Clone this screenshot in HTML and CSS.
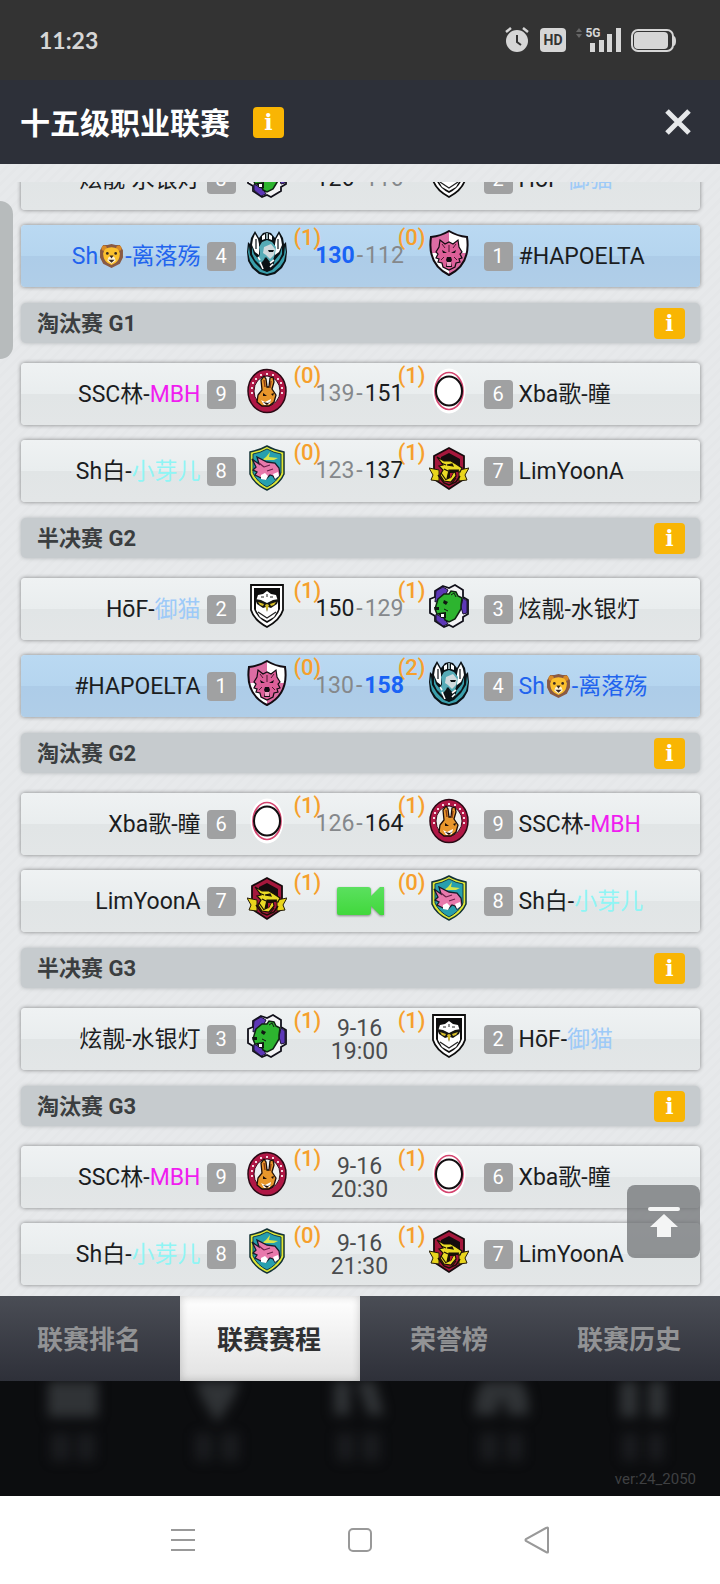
FILE: index.html
```html
<!DOCTYPE html>
<html lang="zh-CN">
<head>
  <meta charset="UTF-8">
  <meta name="viewport" content="width=device-width, initial-scale=1">
  <title>十五级职业联赛</title>
  <link rel="stylesheet" href="styles.css">
</head>
<body>

  <!-- shared drawings: team crests and the lion -->
  <svg class="sprites" aria-hidden="true">
    <symbol id="knight" viewBox="0 0 40 46">
      <path d="M8 1 4 8 3 14 1 12 0 22 1 31 5 38 12 44 20 46 28 44 35 38 39 31 40 22 39 12 37 14 36 8 32 1 28 8 24 3 20 2 16 3 12 8Z" fill="#0b1216"/>
      <path d="M2 16 3 25 8 33 15 40 20 42 25 40 32 33 37 25 38 16 39 22 37 31 33 37 27 42 20 44 13 42 7 37 3 31 1 22ZM5 17 7 24 12 30 14 36 8 30 5 24ZM35 17 33 24 28 30 26 36 32 30 35 24Z" fill="#3a9fac"/>
      <path d="M8 4 6 9 5 15 8 22 12 25 12 14 11 9ZM32 4 34 9 35 15 32 22 28 25 28 14 29 9Z" fill="#fff"/>
      <path d="M15 6 18 4V9L15 10ZM22 4 25 6V10L22 9Z" fill="#fff"/>
      <path d="M19 3h2v6h-2Z" fill="#8fa6aa"/>
      <path d="M12 17 15 12 20 10 25 12 29 17 28 24 26 30 23 32 19 27 16 31 13 34 11 29 13 24Z" fill="#56abb6"/>
      <path d="M17 17 24 14 28 19 27 25 23 29 19 25 16 23Z" fill="#d0dadd"/>
      <path d="M21 20 27 20 26 22 22 22ZM18 27 20 33 22 38 20 42 17 38 17 32Z" fill="#0b1216"/>
      <path d="M9 9v10M31 9v10" stroke="#0b1216" stroke-width="1.2"/>
      <path d="M13 32 16 39M23 33 27 30M23 37 26 34M11 27 13 30" stroke="#fff" stroke-width="1.6"/>
    </symbol>

    <symbol id="wolf" viewBox="0 0 40 46">
      <path d="M20 1Q28 6 38 7 42 34 20 45-2 34 2 7 12 6 20 1Z" fill="#fff"/>
      <path d="M20 1V23H2Q0 14 2 7 12 6 20 1ZM20 23H38Q35 38 20 45Z" fill="#dc6da3"/>
      <path d="M20 1Q28 6 38 7 42 34 20 45-2 34 2 7 12 6 20 1Z" fill="none" stroke="#120c12" stroke-width="2"/>
      <path d="M11 10 16 14 20 12 24 14 29 10 30 17 33 22 31 24 33 28 30 29 31 32 27 33 26 37 20 40 14 37 13 33 9 32 10 29 7 28 9 24 7 22 10 17Z" fill="#dc5f98" stroke="#120c12" stroke-width="1.2"/>
      <path d="M13 20 18 23 14 23ZM27 20 22 23 26 23ZM18 27h4l1 3-1 2 1 5h-6l1-5-1-2Z" fill="#120c12"/>
      <path d="M13 14 16 18M27 14 24 18M20 15v7M15 27l-3 3M25 27l3 3" stroke="#4c1a32"/>
      <path d="M18 32h4v4h-4Z" fill="#eda0c3"/>
    </symbol>

    <symbol id="rabbit" viewBox="0 0 40 46">
      <ellipse cx="20" cy="23" rx="19" ry="21.5" fill="#b01745" stroke="#2b0915" stroke-width="1.5"/>
      <path d="M5 15h2M8 11h2M13 7h2M19 6h2M25 7h2M30 11h2M33 15h2M4 20h2M34 20h2M4 25h2M34 25h2" stroke="#f6d5df" stroke-width="2"/>
      <ellipse cx="20" cy="23" rx="13" ry="15" fill="#eef0ee" stroke="#3b0c1b"/>
      <path d="M15 22 14 12 17 8 19 11 20 19 22 19 23 10 26 9 27 14 25 21 29 27 27 34 22 38 15 38 10 34 11 27Z" fill="#e8962b" stroke="#1b0d08" stroke-width="1.3"/>
      <path d="M17 12 18 19M24 13 23 20" stroke="#8c3c12" stroke-width="1.4"/>
      <path d="M14 32 18 34 24 31 23 36 17 37Z" fill="#fff"/>
      <path d="M16 25 20 28 16 28ZM24 26 27 25 26 28ZM16 34 21 35 24 33 20 37Z" fill="#1b0d08"/>
    </symbol>

    <symbol id="pig" viewBox="0 0 40 46">
      <path d="M20 1Q27 5 37 7V29Q33 39 20 45 7 39 3 29V7Q13 5 20 1Z" fill="#dfe735" stroke="#123236" stroke-width="1.5"/>
      <path d="M20 4Q27 8 34 9V28Q30 37 20 42 10 37 6 28V9Q13 8 20 4Z" fill="#279fae" stroke="#163e48"/>
      <path d="M19 12 23 7 22 12 31 13 27 15 15 15Z" fill="#d6e54b"/>
      <path d="M5 14 12 19 10 12 20 17 28 18 32 23 33 30 28 34 26 31 23 30 19 34 14 33 8 30 10 27 6 25 9 22Z" fill="#e879ac" stroke="#151c28" stroke-width="1.3"/>
      <path d="M14 30 18 28 21 31 19 35 14 34ZM26 29 31 27 32 31 28 34Z" fill="#fff"/>
      <path d="M17 22 23 20M20 26 26 24M12 18 17 22" stroke="#6d2049" stroke-width="1.3"/>
    </symbol>

    <symbol id="oval" viewBox="0 0 40 46">
      <ellipse cx="20" cy="23" rx="16.5" ry="22.5" fill="#fff"/>
      <ellipse cx="20" cy="23" rx="14" ry="18.5" fill="#fff" stroke="#d4446f" stroke-width="1.7"/>
      <ellipse cx="20" cy="23" rx="13" ry="14.5" fill="#fff" stroke="#120d10" stroke-width="2"/>
    </symbol>

    <symbol id="dragon" viewBox="0 0 40 46">
      <path d="M20 3 35 11V34L20 44 5 34V11Z" fill="#a5173c" stroke="#160a0d" stroke-width="1.8"/>
      <path d="M20 8 31 14V22L24 18 12 18 12 12Z" fill="#150c0e"/>
      <path d="M0 23 10 25V36L2 35 4 30ZM40 23 30 25V36L38 35 36 30Z" fill="#e9d51c" stroke="#241b09"/>
      <path d="M8 12 15 16 22 16 27 19 33 23 31 27 26 26 27 31 22 37 15 36 11 30 14 25 10 21 14 20Z" fill="#eadb25" stroke="#181106" stroke-width="1.2"/>
      <path d="M18 20 23 19 24 21ZM20 25 30 25 24 28 22 32 18 34ZM12 18 17 20M12 28 17 35M15 24 19 26M27 33 23 38" fill="#181106" stroke="#181106" stroke-width="1.2"/>
      <path d="M21 28 24 28 21 34Z" fill="#b11a33"/>
      <path d="M9 30 15 38 20 40 27 37 31 31" fill="none" stroke="#181106" stroke-width="1.5"/>
    </symbol>

    <symbol id="owl" viewBox="0 0 40 46">
      <path d="M4 2H36V27Q33 37 20 44 7 37 4 27Z" fill="#fff" stroke="#0d0d0d" stroke-width="1.8"/>
      <path d="M7 5H33V26Q30 35 20 40 10 35 7 26Z" fill="#0d0d0d"/>
      <path d="M11 12 16 11 20 8 24 11 29 12 31 18 31 27 27 34 20 38 13 34 9 27 9 18Z" fill="#fff"/>
      <path d="M8 16 14 17 20 20 26 17 32 16 30 21 24 25 21 24 20 29 19 24 16 25 10 21Z" fill="#151512"/>
      <path d="M11 19 17 21 16 23 13 22ZM29 19 23 21 24 23 27 22ZM18 22 20 21 22 22 20 28Z" fill="#d6bd27"/>
      <path d="M11 29 20 35 29 29" fill="none" stroke="#222" stroke-width="1.2"/>
      <path d="M14 14h3M23 14h3M20 11v3" stroke="#222"/>
    </symbol>

    <symbol id="bear" viewBox="0 0 40 46">
      <path d="M14 3 20 5 26 2 34 7V14L39 17V31L34 34V38L24 44 20 42 15 44 6 38V33L1 30V16L6 14V8Z" fill="#f4f4f6" stroke="#11101a" stroke-width="1.8"/>
      <path d="M14 4 19 7 16 13 10 17 6 19 7 8ZM34 15 38 18V30L34 31 32 24ZM7 31 16 36 19 41 14 43 7 37Z" fill="#5d38b6" stroke="#1a1232"/>
      <path d="M9 16 15 11 20 11 22 8 27 9 29 13 33 15 32 22 32 26 29 31 26 36 20 39 16 37 15 31 8 31 6 26Z" fill="#2db42f" stroke="#102413" stroke-width="1.5"/>
      <path d="M15 17 19 19 17 22 14 20ZM5 24 10 24 10 27 6 27ZM9 30 17 29 17 35 12 35Z" fill="#101712"/>
      <path d="M12 31h3v3h-3Z" fill="#fff"/>
      <path d="M22 12 25 10 27 14M15 26 19 28" fill="none" stroke="#101712"/>
    </symbol>

    <symbol id="lion" viewBox="0 0 24 24">
      <path d="M4 2 8 2 12 1 16 2 20 2 23 7 23 14 20 20 12 24 4 20 1 14 1 7Z" fill="#8a5a43"/>
      <circle cx="5" cy="5" r="2.5" fill="#d98b27"/>
      <circle cx="19" cy="5" r="2.5" fill="#d98b27"/>
      <path d="M12 4Q19 4 20 10 20 16 16 19L12 21 8 19Q4 16 4 10 5 4 12 4Z" fill="#fbc02d"/>
      <path d="M9 14Q12 11 15 14L16 17 12 20 8 17Z" fill="#fff3d6"/>
      <path d="M10 12h4l-2 3ZM9 16h6l-3 3Z" fill="#3a2a24"/>
      <circle cx="8" cy="10" r="1.3" fill="#3a2a24"/>
      <circle cx="16" cy="10" r="1.3" fill="#3a2a24"/>
    </symbol>
  </svg>

  <div class="app">

    <div class="status-bar">
      <span class="clock">11:23</span>
      <svg class="status-icons" viewBox="0 0 172 28" aria-hidden="true">
        <g fill="#d6d6d6">
          <circle cx="13" cy="15" r="11"/>
          <path d="M2 6 7 2M24 6 19 2" stroke="#d6d6d6" stroke-width="2.5"/>
          <path d="M13 9v7l4 3" fill="none" stroke="#333" stroke-width="2"/>
          <rect x="36" y="2" width="26" height="24" rx="4"/>
          <path d="M72 6l3-4 3 4ZM72 8l3 4 3-4Z" fill="#666"/>
          <rect x="86" y="17" width="5" height="9"/>
          <rect x="95" y="14" width="5" height="12"/>
          <rect x="103" y="8" width="5" height="18"/>
          <rect x="112" y="2" width="5" height="24"/>
          <rect x="128" y="4" width="41" height="21" rx="6" fill="none" stroke="#d6d6d6" stroke-width="2"/>
          <rect x="130" y="6" width="34" height="17" rx="4"/>
          <path d="M169 10h1q2 1 2 5t-2 5h-1Z"/>
        </g>
        <text x="49" y="19" class="hd">HD</text>
        <text x="89" y="11" class="net">5G</text>
      </svg>
    </div>

    <header class="title-bar">
      <h1>十五级职业联赛</h1>
      <button class="info" aria-label="联赛说明">i</button>
      <button class="close" aria-label="关闭">
        <svg viewBox="0 0 28 28"><path d="M3 3 25 25M25 3 3 25" stroke="#e6e8ea" stroke-width="5"/></svg>
      </button>
    </header>

    <main class="content">
      <div class="drawer-handle"></div>
      <div class="schedule">

        <div class="match">
          <span class="name home">炫靓-水银灯</span><span class="seed">3</span>
          <svg class="crest"><use href="#bear"/></svg>
          <div class="result"><b class="wins">(1)</b><span class="score"><span class="won">126</span>-<span>116</span></span><b class="wins away">(0)</b></div>
          <svg class="crest away"><use href="#owl"/></svg>
          <span class="seed">2</span><span class="name">HōF-<span class="sky">御猫</span></span>
        </div>
        <div class="match mine">
          <span class="name home me">Sh<svg class="lion"><use href="#lion"/></svg>-离落殇</span><span class="seed">4</span>
          <svg class="crest"><use href="#knight"/></svg>
          <div class="result"><b class="wins">(1)</b><span class="score"><span class="my-win">130</span>-<span>112</span></span><b class="wins away">(0)</b></div>
          <svg class="crest away"><use href="#wolf"/></svg>
          <span class="seed">1</span><span class="name">#HAPOELTA</span>
        </div>

        <div class="round"><h2>淘汰赛 G1</h2><button class="info" aria-label="淘汰赛 G1 说明">i</button></div>
        <div class="match">
          <span class="name home">SSC林-<span class="pink">MBH</span></span><span class="seed">9</span>
          <svg class="crest"><use href="#rabbit"/></svg>
          <div class="result"><b class="wins">(0)</b><span class="score"><span>139</span>-<span class="won">151</span></span><b class="wins away">(1)</b></div>
          <svg class="crest away"><use href="#oval"/></svg>
          <span class="seed">6</span><span class="name">Xba歌-瞳</span>
        </div>
        <div class="match">
          <span class="name home">Sh白-<span class="cyan">小芽儿</span></span><span class="seed">8</span>
          <svg class="crest"><use href="#pig"/></svg>
          <div class="result"><b class="wins">(0)</b><span class="score"><span>123</span>-<span class="won">137</span></span><b class="wins away">(1)</b></div>
          <svg class="crest away"><use href="#dragon"/></svg>
          <span class="seed">7</span><span class="name">LimYoonA</span>
        </div>

        <div class="round"><h2>半决赛 G2</h2><button class="info" aria-label="半决赛 G2 说明">i</button></div>
        <div class="match">
          <span class="name home">HōF-<span class="sky">御猫</span></span><span class="seed">2</span>
          <svg class="crest"><use href="#owl"/></svg>
          <div class="result"><b class="wins">(1)</b><span class="score"><span class="won">150</span>-<span>129</span></span><b class="wins away">(1)</b></div>
          <svg class="crest away"><use href="#bear"/></svg>
          <span class="seed">3</span><span class="name">炫靓-水银灯</span>
        </div>
        <div class="match mine">
          <span class="name home">#HAPOELTA</span><span class="seed">1</span>
          <svg class="crest"><use href="#wolf"/></svg>
          <div class="result"><b class="wins">(0)</b><span class="score"><span>130</span>-<span class="my-win">158</span></span><b class="wins away">(2)</b></div>
          <svg class="crest away"><use href="#knight"/></svg>
          <span class="seed">4</span><span class="name me">Sh<svg class="lion"><use href="#lion"/></svg>-离落殇</span>
        </div>

        <div class="round"><h2>淘汰赛 G2</h2><button class="info" aria-label="淘汰赛 G2 说明">i</button></div>
        <div class="match">
          <span class="name home">Xba歌-瞳</span><span class="seed">6</span>
          <svg class="crest"><use href="#oval"/></svg>
          <div class="result"><b class="wins">(1)</b><span class="score"><span>126</span>-<span class="won">164</span></span><b class="wins away">(1)</b></div>
          <svg class="crest away"><use href="#rabbit"/></svg>
          <span class="seed">9</span><span class="name">SSC林-<span class="pink">MBH</span></span>
        </div>
        <div class="match">
          <span class="name home">LimYoonA</span><span class="seed">7</span>
          <svg class="crest"><use href="#dragon"/></svg>
          <div class="result"><b class="wins">(1)</b>
            <button class="live" aria-label="观看直播">
              <svg viewBox="0 0 48 30">
                <defs><linearGradient id="cam" x2="0" y2="1"><stop stop-color="#5be05f"/><stop offset="1" stop-color="#41d83c"/></linearGradient></defs>
                <path d="M3 1H32Q35 1 35 4V10L44 1H48V29H44L35 20V26Q35 29 32 29H3Q1 29 1 27V3Q1 1 3 1Z" fill="url(#cam)"/>
              </svg>
            </button>
            <b class="wins away">(0)</b></div>
          <svg class="crest away"><use href="#pig"/></svg>
          <span class="seed">8</span><span class="name">Sh白-<span class="cyan">小芽儿</span></span>
        </div>

        <div class="round"><h2>半决赛 G3</h2><button class="info" aria-label="半决赛 G3 说明">i</button></div>
        <div class="match">
          <span class="name home">炫靓-水银灯</span><span class="seed">3</span>
          <svg class="crest"><use href="#bear"/></svg>
          <div class="result"><b class="wins">(1)</b><time class="date">9-16<br>19:00</time><b class="wins away">(1)</b></div>
          <svg class="crest away"><use href="#owl"/></svg>
          <span class="seed">2</span><span class="name">HōF-<span class="sky">御猫</span></span>
        </div>

        <div class="round"><h2>淘汰赛 G3</h2><button class="info" aria-label="淘汰赛 G3 说明">i</button></div>
        <div class="match">
          <span class="name home">SSC林-<span class="pink">MBH</span></span><span class="seed">9</span>
          <svg class="crest"><use href="#rabbit"/></svg>
          <div class="result"><b class="wins">(1)</b><time class="date">9-16<br>20:30</time><b class="wins away">(1)</b></div>
          <svg class="crest away"><use href="#oval"/></svg>
          <span class="seed">6</span><span class="name">Xba歌-瞳</span>
        </div>
        <div class="match">
          <span class="name home">Sh白-<span class="cyan">小芽儿</span></span><span class="seed">8</span>
          <svg class="crest"><use href="#pig"/></svg>
          <div class="result"><b class="wins">(0)</b><time class="date">9-16<br>21:30</time><b class="wins away">(1)</b></div>
          <svg class="crest away"><use href="#dragon"/></svg>
          <span class="seed">7</span><span class="name">LimYoonA</span>
        </div>

      </div>
      <button class="to-top" aria-label="回到顶部">
        <svg viewBox="0 0 32 32"><path d="M2 1H30Q32 1 32 3T30 5H2Q0 5 0 3T2 1ZM16 8 30 21H23V31H9V21H2Z" fill="#f4f5f5"/></svg>
      </button>
    </main>

    <nav class="tabs">
      <button>联赛排名</button>
      <button class="active">联赛赛程</button>
      <button>荣誉榜</button>
      <button>联赛历史</button>
    </nav>

    <footer class="backdrop">
      <svg viewBox="0 0 720 115" preserveAspectRatio="none" aria-hidden="true">
        <g fill="#303336">
          <path d="M48-12H98V36H48ZM190-12H245L232 20 217 42 203 20ZM334-10H350V34H334ZM352-12H372L384 34H368ZM476 14Q486-12 502-12T528 14L529 34H508L502 14 496 34H474ZM620-12H638V36H620ZM648-12H666V36H648Z"/>
          <g opacity=".4">
            <path d="M51 52H70V80H51ZM77 52H95V80H77ZM195 52H212V80H195ZM221 52H239V80H221ZM337 52H354V80H337ZM362 52H380V80H362ZM480 52H498V80H480ZM506 52H523V80H506ZM622 52H638V80H622ZM648 52H664V80H648Z"/>
          </g>
        </g>
      </svg>
      <span class="version">ver:24_2050</span>
    </footer>

    <div class="system-nav">
      <button aria-label="菜单"><svg viewBox="0 0 28 28"><path d="M2 4H26M2 14H26M2 24H26"/></svg></button>
      <button aria-label="主页"><svg viewBox="0 0 28 28"><rect x="3" y="3" width="22" height="22" rx="4"/></svg></button>
      <button aria-label="返回"><svg viewBox="0 0 28 28"><path d="M25 2V26Q25 27 23 26L3 15Q2 14 3 13L23 2Q25 1 25 2Z"/></svg></button>
    </div>

  </div>

</body>
</html>
```

FILE: styles.css
```css
* {
  box-sizing: border-box;
}
body {
  margin: 0;
  font-family: Roboto, "Noto Sans CJK SC", sans-serif;
  color: #1b1d1f;
}
button {
  padding: 0;
  border: none;
  background: none;
  font-family: inherit;
  cursor: pointer;
}
svg {
  display: block;
}
.sprites {
  position: absolute;
  width: 0;
  height: 0;
}
.app {
  display: flex;
  flex-direction: column;
  height: 100vh;
}

/* phone status bar */
.status-bar {
  display: flex;
  align-items: center;
  justify-content: space-between;
  height: 80px;
  padding: 0 44px 0 39px;
  background: #333;
  color: #d6d6d6;
}
.clock {
  font-family: Lato, Roboto, sans-serif;
  font-size: 23px;
  font-weight: bold;
}
.status-icons {
  width: 172px;
  height: 28px;
}
.hd {
  font-size: 14px;
  font-weight: bold;
  fill: #333;
  text-anchor: middle;
}
.net {
  font-size: 12px;
  font-weight: bold;
  fill: #d6d6d6;
  text-anchor: middle;
}

.title-bar {
  display: flex;
  align-items: center;
  height: 84px;
  padding: 0 28px 0 20px;
  background: #2d3039;
}
.title-bar h1 {
  margin: 0 23px 0 0;
  padding-top: 3px;
  font-size: 30px;
  font-weight: bold;
  line-height: 40px;
  color: #fff;
}
.close {
  margin-left: auto;
}
.close svg {
  width: 28px;
  height: 28px;
}
.info {
  width: 31px;
  height: 31px;
  border-radius: 4px;
  background: #f9b503;
  color: #fff;
  font-family: "DejaVu Serif", serif;
  font-size: 22px;
  font-weight: bold;
  line-height: 31px;
}

/* schedule list, scrolled to its end */
.content {
  position: relative;
  flex: 1;
  min-height: 0;
  padding-top: 18px;
  background: repeating-linear-gradient(135deg, #e7e9eb 0 5px, #e5e7e9 5px 8px);
}
.schedule {
  display: flex;
  flex-direction: column;
  justify-content: flex-end;
  gap: 15px;
  height: 100%;
  padding: 0 20px 11px 21px;
  overflow: hidden;
}
.drawer-handle {
  position: absolute;
  left: 0;
  top: 37px;
  width: 13px;
  height: 158px;
  border-radius: 0 13px 13px 0;
  background: #b7bbbc;
}
.round {
  display: flex;
  flex: none;
  align-items: center;
  justify-content: space-between;
  height: 40px;
  margin: 1px 0 5px;
  padding: 0 15px 0 16px;
  border-radius: 5px;
  background: #c6cbce;
  box-shadow: 0 0 4px #b0b4b6;
}
.round h2 {
  margin: 0;
  padding-top: 2px;
  font-size: 22px;
  font-weight: bold;
  line-height: 30px;
  color: #3b3e40;
}
.match {
  display: grid;
  flex: none;
  grid-template-columns: minmax(0, 1fr) 29px 62px 124px 62px 29px minmax(0, 1fr);
  align-items: center;
  height: 62px;
  padding-right: 2px;
  border-radius: 4px;
  background: linear-gradient(#eff2f3, #e9edee 50%, #e1e5e6 50%, #e3e6e7);
  box-shadow: 0 0 4px rgba(0, 0, 0, .45);
}
.match.mine {
  background: linear-gradient(#bad9f2, #b5d5ef 50%, #adcce8 50%, #b0cee8);
}
.name {
  padding: 2px 0 0 6px;
  font-size: 23px;
  line-height: 30px;
  white-space: nowrap;
}
.name.home {
  padding: 2px 6px 0 0;
  text-align: right;
}
.me {
  color: #2264ee;
}
.pink {
  color: #f01df0;
}
.cyan {
  color: #8ff5f5;
}
.sky {
  color: #9dcaf8;
}
.lion {
  display: inline-block;
  width: 25px;
  height: 25px;
  margin: 0 1px;
  vertical-align: -4px;
}
.seed {
  height: 29px;
  border-radius: 4px;
  background: #a0a1a2;
  color: #fff;
  font-size: 20px;
  line-height: 29px;
  text-align: center;
}
.crest {
  align-self: start;
  width: 40px;
  height: 46px;
  margin: 5px 0 0 11px;
}
.crest.away {
  margin-left: 7px;
}
.result {
  position: relative;
  display: flex;
  align-items: center;
  justify-content: center;
  height: 62px;
}
.wins {
  position: absolute;
  top: 0;
  left: -4px;
  color: #f6a02c;
  font-size: 22px;
  font-weight: 500;
  line-height: 26px;
}
.wins.away {
  left: auto;
  right: -4px;
}
.score {
  color: #85888b;
  font-size: 23px;
  line-height: 30px;
}
.score span {
  margin: 0 2px;
}
.won {
  color: #1b1d1f;
}
.my-win {
  color: #1a63f5;
  font-weight: bold;
}
.date {
  padding-top: 2px;
  color: #4a4c4e;
  font-size: 23px;
  line-height: 23px;
  text-align: center;
}
.live svg {
  width: 48px;
  height: 30px;
  filter: drop-shadow(0 1px 1px rgba(0, 0, 0, .4));
}
.to-top {
  position: absolute;
  right: 20px;
  bottom: 38px;
  display: grid;
  place-items: center;
  width: 73px;
  height: 73px;
  border-radius: 8px;
  background: rgba(112, 115, 117, .75);
}
.to-top svg {
  width: 32px;
  height: 32px;
}

.tabs {
  display: grid;
  grid-template-columns: repeat(4, 1fr);
  height: 85px;
  background: linear-gradient(#4a4d55, #2e3039);
}
.tabs button {
  padding: 0 2px 2px 0;
  color: #929395;
  font-size: 26px;
  font-weight: bold;
}
.tabs button.active {
  background: linear-gradient(#fff, #e2e2e2);
  box-shadow: inset 0 0 8px rgba(0, 0, 0, .2);
  color: #2f3032;
}

/* dimmed main menu behind the dialog */
.backdrop {
  position: relative;
  height: 115px;
  overflow: hidden;
  background: #0c0d0f;
}
.backdrop svg {
  width: 100%;
  height: 115px;
  filter: blur(6px);
}
.version {
  position: absolute;
  right: 24px;
  bottom: 7px;
  color: #3f4042;
  font-size: 15px;
  line-height: 20px;
}

.system-nav {
  display: flex;
  align-items: center;
  justify-content: center;
  gap: 149px;
  height: 88px;
  background: #fff;
}
.system-nav svg {
  width: 28px;
  height: 28px;
  fill: none;
  stroke: #999;
  stroke-width: 2;
}
```
